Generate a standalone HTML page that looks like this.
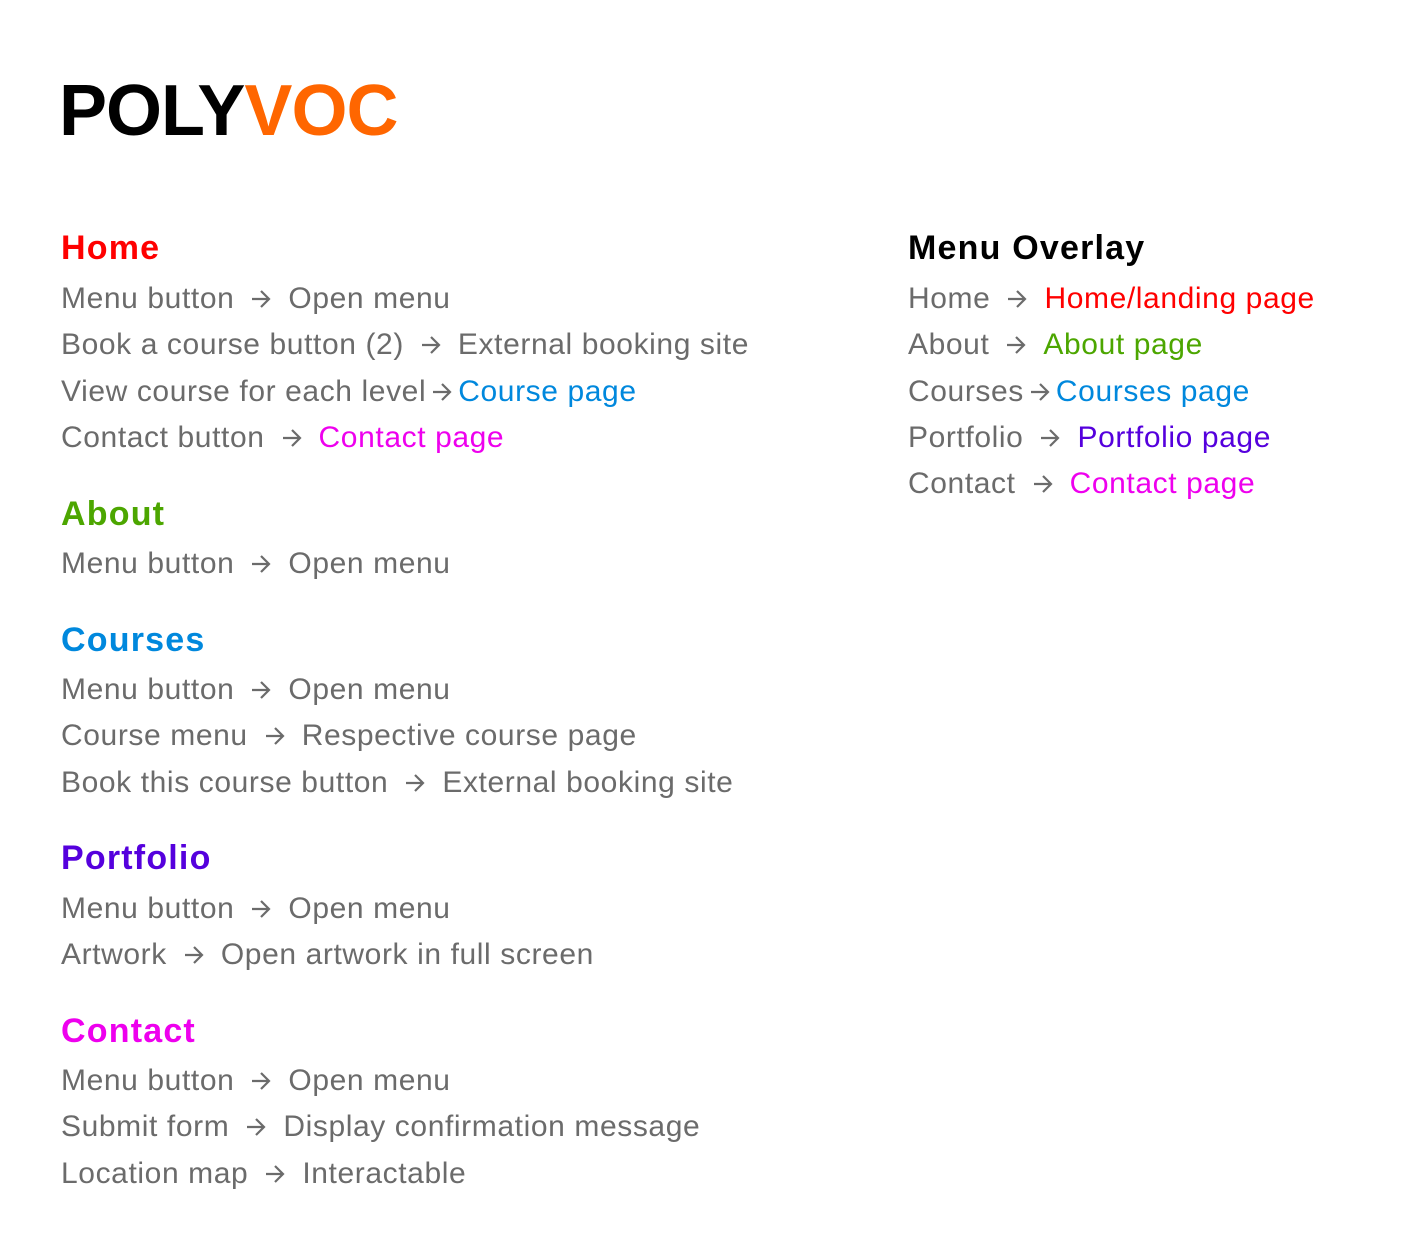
<!DOCTYPE html>
<html><head><meta charset="utf-8"><style>
body{margin:0;width:1407px;height:1257px;background:#fff;position:relative;font-family:"Liberation Sans","DejaVu Sans",sans-serif;overflow:hidden}
.l{position:absolute;font-size:30px;line-height:30px;letter-spacing:0.6px;color:#6b6b6b;white-space:nowrap}
.h{position:absolute;font-size:34px;line-height:34px;letter-spacing:1.2px;font-weight:bold;white-space:nowrap}
.a{display:inline-block;width:22px;height:22px;margin:0 16px;vertical-align:-2px}
.n{margin:0 5px}
.r{color:#ff0000}.g{color:#4ca600}.b{color:#0088dd}.p{color:#5500dd}.m{color:#ee00ee}
</style></head><body>
<svg width="0" height="0" style="position:absolute"><defs><symbol id="ar" viewBox="0 0 22 22"><path d="M2 11H19M11 3L19 11L11 19" fill="none" stroke="#6b6b6b" stroke-width="2.2"/></symbol></defs></svg>
<div style="position:absolute;left:59px;top:75px;font-size:72px;line-height:72px;font-weight:bold;letter-spacing:-1px">POLY<span style="color:#ff6600">VOC</span></div>

<div class="h r" style="left:61px;top:231px">Home</div>
<div class="l" style="left:61px;top:284px">Menu button<svg class="a"><use href="#ar"/></svg>Open menu</div>
<div class="l" style="left:61px;top:330px">Book a course button (2)<svg class="a"><use href="#ar"/></svg>External booking site</div>
<div class="l" style="left:61px;top:377px">View course for each level<svg class="a n"><use href="#ar"/></svg><span class="b">Course page</span></div>
<div class="l" style="left:61px;top:423px">Contact button<svg class="a"><use href="#ar"/></svg><span class="m">Contact page</span></div>

<div class="h g" style="left:61px;top:497px">About</div>
<div class="l" style="left:61px;top:549px">Menu button<svg class="a"><use href="#ar"/></svg>Open menu</div>

<div class="h b" style="left:61px;top:623px">Courses</div>
<div class="l" style="left:61px;top:675px">Menu button<svg class="a"><use href="#ar"/></svg>Open menu</div>
<div class="l" style="left:61px;top:721px">Course menu<svg class="a"><use href="#ar"/></svg>Respective course page</div>
<div class="l" style="left:61px;top:768px">Book this course button<svg class="a"><use href="#ar"/></svg>External booking site</div>

<div class="h p" style="left:61px;top:841px">Portfolio</div>
<div class="l" style="left:61px;top:894px">Menu button<svg class="a"><use href="#ar"/></svg>Open menu</div>
<div class="l" style="left:61px;top:940px">Artwork<svg class="a"><use href="#ar"/></svg>Open artwork in full screen</div>

<div class="h m" style="left:61px;top:1014px">Contact</div>
<div class="l" style="left:61px;top:1066px">Menu button<svg class="a"><use href="#ar"/></svg>Open menu</div>
<div class="l" style="left:61px;top:1112px">Submit form<svg class="a"><use href="#ar"/></svg>Display confirmation message</div>
<div class="l" style="left:61px;top:1159px">Location map<svg class="a"><use href="#ar"/></svg>Interactable</div>

<div class="h" style="left:908px;top:231px;color:#000">Menu Overlay</div>
<div class="l" style="left:908px;top:284px">Home<svg class="a"><use href="#ar"/></svg><span class="r">Home/landing page</span></div>
<div class="l" style="left:908px;top:330px">About<svg class="a"><use href="#ar"/></svg><span class="g">About page</span></div>
<div class="l" style="left:908px;top:377px">Courses<svg class="a n"><use href="#ar"/></svg><span class="b">Courses page</span></div>
<div class="l" style="left:908px;top:423px">Portfolio<svg class="a"><use href="#ar"/></svg><span class="p">Portfolio page</span></div>
<div class="l" style="left:908px;top:469px">Contact<svg class="a"><use href="#ar"/></svg><span class="m">Contact page</span></div>
</body></html>
